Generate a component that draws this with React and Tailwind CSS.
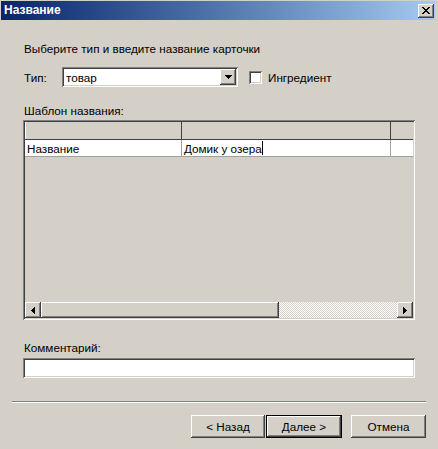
import React from "react";

const raised =
  "shadow-[inset_-1px_-1px_#404040,inset_1px_1px_#ffffff,inset_-2px_-2px_#808080,inset_2px_2px_#d4d0c8]";
const sunken =
  "shadow-[inset_1px_1px_#808080,inset_-1px_-1px_#ffffff,inset_2px_2px_#404040,inset_-2px_-2px_#d4d0c8]";

function DownArrow() {
  return (
    <svg width="7" height="4" viewBox="0 0 7 4" shapeRendering="crispEdges">
      <path d="M0 0h7v1H0zM1 1h5v1H1zM2 2h3v1H2zM3 3h1v1H3z" fill="#000" />
    </svg>
  );
}

function SideArrow({ dir }) {
  const d =
    dir === "left"
      ? "M3 0h1v7H3zM2 1h1v5H2zM1 2h1v3H1zM0 3h1v1H0z"
      : "M0 0h1v7H0zM1 1h1v5H1zM2 2h1v3H2zM3 3h1v1H3z";
  return (
    <svg width="4" height="7" viewBox="0 0 4 7" shapeRendering="crispEdges">
      <path d={d} fill="#000" />
    </svg>
  );
}

function Button({ children, isDefault, width }) {
  if (isDefault) {
    return (
      <div className={`${width} h-[23px] border border-black flex`}>
        <div className={`flex-1 flex items-center justify-center ${raised}`}>{children}</div>
      </div>
    );
  }
  return (
    <div className={`${width} h-[23px] flex items-center justify-center ${raised}`}>{children}</div>
  );
}

export default function App() {
  return (
    <div className="w-[438px] h-[449px] bg-[#d4d0c8] font-['Liberation_Sans',Arial,sans-serif] text-[11.7px] leading-[13px] text-black flex flex-col overflow-hidden">
      {/* caption bar */}
      <div className="h-[19px] mt-px ml-px mr-[3px] flex items-center justify-between pl-[3px] pr-px bg-gradient-to-r from-[#0a246a] to-[#a6caf0]">
        <span className="font-bold text-white text-[12px]">Название</span>
        <div className={`w-[16px] h-[14px] bg-[#d4d0c8] flex items-center justify-center ${raised}`}>
          <svg width="8" height="7" viewBox="0 0 8 7" shapeRendering="crispEdges">
            <path
              d="M0 0h2v1H0zM6 0h2v1H6zM1 1h2v1H1zM5 1h2v1H5zM2 2h4v1H2zM3 3h2v1H3zM2 4h4v1H2zM1 5h2v1H1zM5 5h2v1H5zM0 6h2v1H0zM6 6h2v1H6z"
              fill="#000"
            />
          </svg>
        </div>
      </div>

      <div className="pl-[23px] pr-[23px] flex flex-col">
        <div className="mt-[22px] pl-px">Выберите тип и введите название карточки</div>

        <div className="mt-[12px] h-[20px] flex items-center">
          <span className="w-[39px] pl-px">Тип:</span>
          <div className={`w-[176px] h-[20px] bg-white flex items-center p-[2px] ${sunken}`}>
            <span className="flex-1 pl-[2px]">товар</span>
            <div className={`w-[16px] h-[16px] bg-[#d4d0c8] flex items-center justify-center ${raised}`}>
              <DownArrow />
            </div>
          </div>
          <div className={`ml-[11px] w-[13px] h-[13px] bg-white ${sunken}`} />
          <span className="ml-[6px]">Ингредиент</span>
        </div>

        <div className="mt-[17px] pl-px">Шаблон названия:</div>

        {/* template grid */}
        <div className={`mt-[3px] w-[392px] h-[200px] p-[2px] flex flex-col ${sunken}`}>
          <div className="flex h-[18px] border-b border-[#404040]">
            <div className="w-[157px] border-r border-[#404040] border-l border-l-white" />
            <div className="w-[209px] border-r border-[#404040]" />
            <div className="flex-1" />
          </div>
          <div className="flex h-[17px] bg-white border-b border-[#a0a0a0]">
            <div className="w-[157px] border-r border-[#a0a0a0] pl-[2px] flex items-center">Название</div>
            <div className="w-[209px] border-r border-[#a0a0a0] pl-[2px] flex items-center">
              Домик у озера
              <span className="w-px h-[14px] bg-black" />
            </div>
            <div className="flex-1" />
          </div>
          <div className="flex-1" />
          {/* horizontal scrollbar */}
          <div className="flex h-[16px]">
            <div className={`w-[16px] h-[16px] flex items-center justify-center ${raised}`}>
              <SideArrow dir="left" />
            </div>
            <div className={`w-[238px] h-[16px] ${raised}`} />
            <div className="flex-1 bg-[repeating-conic-gradient(#d4d0c8_0%_25%,#ffffff_0%_50%)] bg-[length:2px_2px]" />
            <div className={`w-[16px] h-[16px] flex items-center justify-center ${raised}`}>
              <SideArrow dir="right" />
            </div>
          </div>
        </div>

        <div className="mt-[21px] pl-px">Комментарий:</div>
        <div className={`mt-[4px] w-[392px] h-[20px] bg-white ${sunken}`} />
      </div>

      {/* separator */}
      <div className="mt-[23px] mx-[12px] h-[2px] border-t border-[#808080] border-b border-b-white" />

      <div className="mt-[12px] pr-[12px] flex justify-end">
        <Button width="w-[74px]">&lt; Назад</Button>
        <div className="w-[1px]" />
        <Button width="w-[76px]" isDefault>
          Далее &gt;
        </Button>
        <div className="w-[9px]" />
        <Button width="w-[75px]">Отмена</Button>
      </div>
    </div>
  );
}
